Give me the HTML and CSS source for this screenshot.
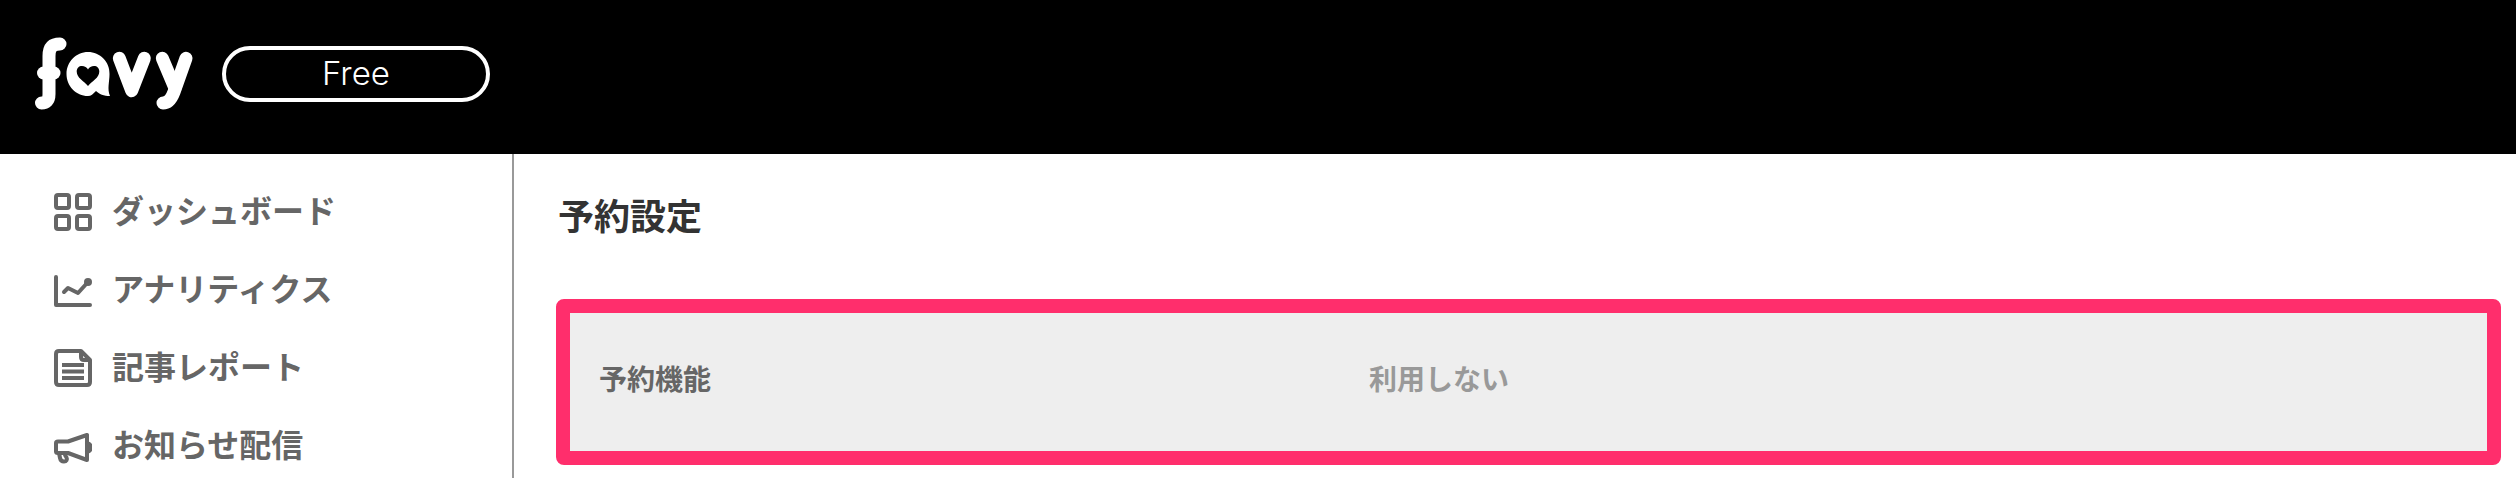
FILE: index.html
```html
<!DOCTYPE html>
<html lang="ja">
<head>
  <meta charset="UTF-8" />
  <title>favy - 予約設定</title>
  <link rel="stylesheet" href="styles.css">
</head>
<body>
  <header class="topbar">
    <svg class="logo" viewBox="0 0 180 90" aria-label="favy">
      <g fill="none" stroke="#fff" stroke-width="13" stroke-linecap="round" stroke-linejoin="round">
        <path d="M28 12 C20 12 17 16 17 24 V62 C17 69 14 71 9.500 71" />
        <path d="M11.500 41 H22" />
        <path d="M87.300 26.300 L99.700 58.700 L112.300 26.300" />
        <path d="M130.300 26.300 L143 56.300" />
        <path d="M154 26.300 L142 60 C139 68 136 71 131 71" />
      </g>
      <path fill="#fff" d="M56 20 C68 20 78 30 77.500 42 C77.500 50 75 57 78 64 C72 64 67 62 64 59 C61 62 59 64 56 64 C44 64 34.500 54 34.500 42 C34.500 30 44 20 56 20 Z" />
      <path fill="#000" d="M56 54 C52 49 44.700 46 44.700 39.500 C44.700 36 47 34 50 34 C52.500 34 55 35.500 56 37.500 C57 35.500 59.500 34 62 34 C65 34 67.300 36 67.300 39.500 C67.300 46 60 49 56 54 Z" />
    </svg>
    <span class="plan">Free</span>
  </header>

  <div class="layout">
    <nav class="sidebar">
      <a class="nav-item" href="#">
        <svg class="nav-icon" viewBox="0 0 38 38">
          <g fill="none" stroke="#666" stroke-width="4">
            <rect x="2" y="2" width="13" height="13" rx="2" />
            <rect x="23" y="2" width="13" height="13" rx="2" />
            <rect x="2" y="23" width="13" height="13" rx="2" />
            <rect x="23" y="23" width="13" height="13" rx="2" />
          </g>
        </svg>
        <span class="nav-text">ダッシュボード</span>
      </a>
      <a class="nav-item" href="#">
        <svg class="nav-icon" viewBox="0 0 38 38">
          <g fill="none" stroke="#666" stroke-width="4" stroke-linecap="round" stroke-linejoin="round">
            <path d="M2 6 V34 H36" />
            <path d="M10 21 L14 17 L24 22 L34 11" />
          </g>
          <circle cx="34" cy="11" r="4" fill="#666" />
        </svg>
        <span class="nav-text">アナリティクス</span>
      </a>
      <a class="nav-item" href="#">
        <svg class="nav-icon" viewBox="0 0 38 38">
          <g fill="none" stroke="#666" stroke-width="4" stroke-linejoin="round">
            <path d="M5 2 H27 L36 11 V33 C36 35 35 36 33 36 H5 C3 36 2 35 2 33 V5 C2 3 3 2 5 2 Z" />
            <path d="M27 2 V8 C27 10 28 11 30 11 H36" />
            <path d="M8 16 H30 M8 22.500 H30 M8 29 H30" />
          </g>
        </svg>
        <span class="nav-text">記事レポート</span>
      </a>
      <a class="nav-item" href="#">
        <svg class="nav-icon" viewBox="0 0 38 38">
          <g fill="none" stroke="#666" stroke-width="4" stroke-linejoin="round" stroke-linecap="round">
            <path d="M2 16 C2 15 3 14.500 4 14.500 H14 L33 8 V33 L14 26 H4 C3 26 2 25.500 2 24.500 Z" />
            <path d="M33 16 C36 17 37 18.500 37 20.500 C37 22.500 36 24 33 25" />
            <path d="M5 26 L6 31 C6.500 33.500 8 34.500 10 34.500 C12.500 34.500 13.500 32.500 12.500 30.500 L11 28" />
          </g>
        </svg>
        <span class="nav-text">お知らせ配信</span>
      </a>
    </nav>

    <main class="content">
      <h1 class="page-title">予約設定</h1>
      <div class="setting-row">
        <span class="setting-label">予約機能</span>
        <span class="setting-value">利用しない</span>
      </div>
    </main>
  </div>
</body>
</html>
```

FILE: styles.css
```css
* {
  box-sizing: border-box;
  margin: 0;
  padding: 0;
}

html,
body {
  height: 100%;
  overflow: hidden;
}

body {
  display: flex;
  flex-direction: column;
  background: #fff;
  font-family: "Noto Sans CJK JP", "Noto Sans", sans-serif;
}

.topbar {
  display: flex;
  align-items: center;
  flex: 0 0 154px;
  background: #000;
  padding-left: 32px;
}

.logo {
  width: 180px;
  height: 90px;
}

.plan {
  display: block;
  width: 268px;
  height: 56px;
  margin-left: 10px;
  margin-top: -6px;
  border: 4px solid #fff;
  border-radius: 28px;
  color: #fff;
  font-family: "Inter", sans-serif;
  font-size: 33px;
  font-weight: 300;
  line-height: 46px;
  text-align: center;
}

.layout {
  display: flex;
  flex: 1;
}

.sidebar {
  flex: 0 0 514px;
  border-right: 2px solid #999;
  padding: 19px 0 0 54px;
}

.nav-item {
  display: flex;
  align-items: center;
  gap: 20px;
  height: 78px;
  color: #666;
  font-size: 32px;
  font-weight: 700;
  text-decoration: none;
}

.nav-icon {
  width: 38px;
  height: 38px;
  flex: none;
}

.nav-text {
  padding-bottom: 6px;
}

.content {
  flex: 1;
  padding: 35px 15px 0 42px;
}

.page-title {
  color: #333;
  font-size: 36px;
  font-weight: 700;
  line-height: 50px;
  padding-left: 2px;
}

.setting-row {
  display: flex;
  align-items: center;
  height: 166px;
  margin-top: 60px;
  background: #eee;
  border: 14px solid #ff2e6c;
  border-radius: 8px;
  padding: 0 0 8px 29px;
  font-size: 28px;
  font-weight: 700;
}

.setting-label {
  flex: 0 0 770px;
  color: #666;
}

.setting-value {
  color: #999;
}
```
